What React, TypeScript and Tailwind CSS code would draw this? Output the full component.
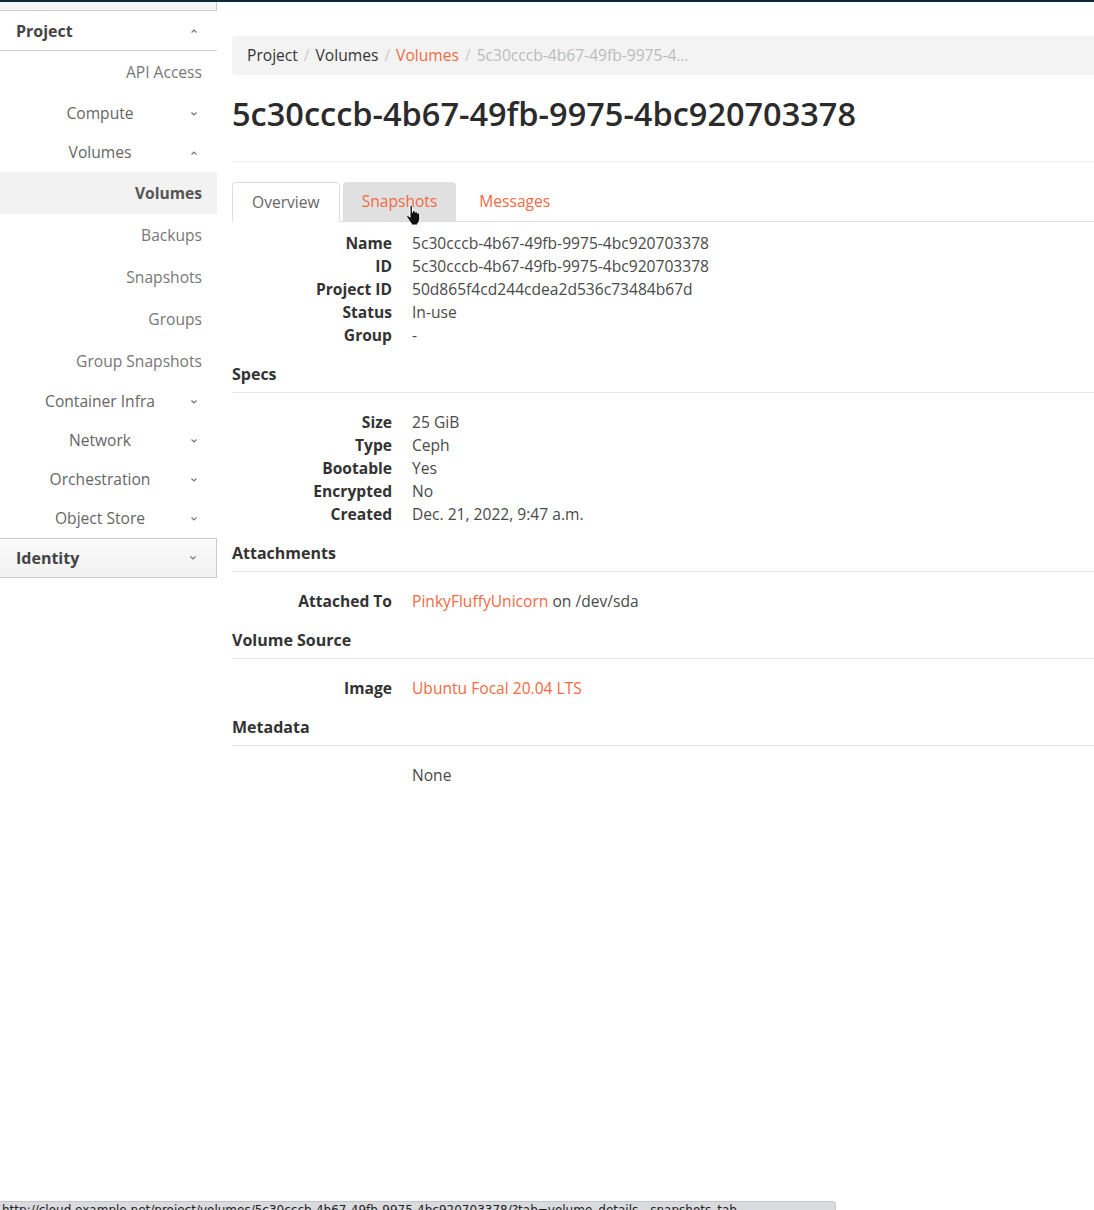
import type { ReactNode } from "react";

const FONT = { fontFamily: '"Open Sans", "Noto Sans", sans-serif' };
const VOLUME_ID = "5c30cccb-4b67-49fb-9975-4bc920703378";

// small chevrons used by the collapsible nav groups
const Chevron = ({ up = false }: { up?: boolean }) => (
  <svg width="8" height="6" viewBox="0 0 8 6" className="text-[#777]">
    <polyline
      points={up ? "1.5,4.5 4,2 6.5,4.5" : "1.5,1.5 4,4 6.5,1.5"}
      fill="none"
      stroke="currentColor"
      strokeWidth="1.2"
    />
  </svg>
);

const NavGroup = ({ label, open = false }: { label: string; open?: boolean }) => (
  <div className="flex items-center h-[39px] pt-[1px] pr-[19px]">
    <span className="flex-1 text-center pl-[10px] text-[#666]">{label}</span>
    <Chevron up={open} />
  </div>
);

const NavLink = ({ label, active = false }: { label: string; active?: boolean }) => (
  <div
    className={`h-[42px] flex items-center justify-end pt-[2px] pr-[15px] ${
      active ? "bg-[#f2f2f2] font-bold text-[#555]" : "text-[#777]"
    }`}
  >
    {label}
  </div>
);

const Sidebar = () => (
  <aside className="w-[217px] shrink-0">
    <div className="h-[9px] bg-[#f5f5f5] border-r border-b border-[#ccc]" />
    <div className="h-[40px] flex items-center justify-between pl-4 pr-[19px] border-b border-[#ccc]">
      <span className="font-bold text-[16px] text-[#444]">Project</span>
      <Chevron up />
    </div>
    <NavLink label="API Access" />
    <div className="h-[1px]" />
    <NavGroup label="Compute" />
    <NavGroup label="Volumes" open />
    <NavLink label="Volumes" active />
    <NavLink label="Backups" />
    <NavLink label="Snapshots" />
    <NavLink label="Groups" />
    <NavLink label="Group Snapshots" />
    <NavGroup label="Container Infra" />
    <NavGroup label="Network" />
    <NavGroup label="Orchestration" />
    <NavGroup label="Object Store" />
    <div className="h-[40px] flex items-center justify-between pl-4 pr-[19px] border-y border-r border-[#ccc] bg-gradient-to-b from-[#fafafa] to-[#f2f2f2]">
      <span className="font-bold text-[16px] text-[#444]">Identity</span>
      <Chevron />
    </div>
  </aside>
);

const Link = ({ children }: { children: ReactNode }) => (
  <span className="text-[#f26a43]">{children}</span>
);

const Section = ({ title }: { title: string }) => (
  <h3 className="mt-[15px] pb-[6px] leading-[24px] border-b border-[#e6e6e6] font-bold text-[16px] text-[#333]">
    {title}
  </h3>
);

const DetailList = ({ rows, className = "" }: { rows: [string, ReactNode][]; className?: string }) => (
  <dl className={`grid grid-cols-[160px_1fr] gap-x-5 leading-[23px] ${className}`}>
    {rows.map(([k, v]) => (
      <div key={k} className="contents">
        <dt className="text-right font-bold text-[#333]">{k}</dt>
        <dd className="text-[#4a4a4a]">{v}</dd>
      </div>
    ))}
  </dl>
);

// pointer hand hovering the Snapshots tab
const HandCursor = () => (
  <svg
    width="16"
    height="20"
    viewBox="0 0 16 20"
    className="absolute left-[63px] top-[23px]"
  >
    <path
      d="M4 1.5c0-.8.6-1.2 1.2-1.2s1.2.4 1.2 1.2v6l.2-1.4c.3-.9 2.2-.9 2.4.2l.1 1c.2-.9 2.1-.9 2.3.3v.8c.4-.8 2.2-.7 2.3.5l.1 4.2c0 2.5-1 4.3-2.3 5.6v1.3H5.3v-1.5C3.8 16.6 1.6 13.6.8 11.9c-.6-1.1.6-2.1 1.6-1.2L4 12.3z"
      fill="#111"
      stroke="#fff"
      strokeWidth="1"
    />
  </svg>
);

const Tabs = () => (
  <div className="mt-5 flex h-[40px] border-b border-[#ddd]">
    <div className="px-[19px] pt-[1px] flex items-center bg-white border border-[#ddd] border-b-white rounded-t-[4px] mb-[-1px] text-[#666]">
      Overview
    </div>
    <div className="relative ml-[3px] px-[19px] pt-[1px] flex items-center bg-[#e0e0e0] rounded-t-[4px] text-[#f26a43]">
      Snapshots
      <HandCursor />
    </div>
    <div className="ml-[3px] px-5 pt-[1px] flex items-center text-[#f26a43]">Messages</div>
  </div>
);

const Breadcrumb = () => {
  const sep = <span className="px-[6px] text-[#ccc]">/</span>;
  return (
    <nav className="mt-[34px] h-[39px] flex items-center pt-[1px] pl-[15px] bg-[#f3f3f3] rounded-l-[4px] whitespace-nowrap">
      <span className="text-[#333]">Project</span>
      {sep}
      <span className="text-[#333]">Volumes</span>
      {sep}
      <Link>Volumes</Link>
      {sep}
      <span className="text-[#bbb]">5c30cccb-4b67-49fb-9975-4…</span>
    </nav>
  );
};

export default function App() {
  return (
    <div className="relative min-h-[1210px] bg-white text-[15.6px]" style={FONT}>
      <div className="h-[2px] bg-[#0d2a3c]" />
      <div className="flex">
        <Sidebar />
        <main className="flex-1 min-w-0 pl-[15px]">
          <Breadcrumb />
          <h1 className="mt-[19px] pb-[27px] leading-[40px] border-b border-[#eee] text-[32.5px] font-semibold text-[#2b2b2b] whitespace-nowrap">
            {VOLUME_ID}
          </h1>
          <Tabs />

          <DetailList
            className="mt-[10px]"
            rows={[
              ["Name", VOLUME_ID],
              ["ID", VOLUME_ID],
              ["Project ID", "50d865f4cd244cdea2d536c73484b67d"],
              ["Status", "In-use"],
              ["Group", "-"],
            ]}
          />

          <Section title="Specs" />
          <DetailList
            className="mt-[18px]"
            rows={[
              ["Size", "25 GiB"],
              ["Type", "Ceph"],
              ["Bootable", "Yes"],
              ["Encrypted", "No"],
              ["Created", "Dec. 21, 2022, 9:47 a.m."],
            ]}
          />

          <Section title="Attachments" />
          <DetailList
            className="mt-[18px]"
            rows={[
              [
                "Attached To",
                <>
                  <Link>PinkyFluffyUnicorn</Link> on /dev/sda
                </>,
              ],
            ]}
          />

          <Section title="Volume Source" />
          <DetailList className="mt-[18px]" rows={[["Image", <Link>Ubuntu Focal 20.04 LTS</Link>]]} />

          <Section title="Metadata" />
          <DetailList className="mt-[18px]" rows={[["", "None"]]} />
        </main>
      </div>

      {/* browser link preview bubble at the bottom edge */}
      <div className="absolute left-0 top-[1201px] w-[836px] h-[12px] overflow-hidden bg-[#d9dbde] rounded-tr-[4px] border-t border-r border-[#c4c6c9]">
        <div className="pl-[2px] text-[12px] leading-[14px] mt-[1px] text-[#222] whitespace-nowrap" style={{ fontFamily: '"DejaVu Sans", sans-serif' }}>
          http://cloud.example.net/project/volumes/5c30cccb-4b67-49fb-9975-4bc920703378/?tab=volume_details__snapshots_tab
        </div>
      </div>
    </div>
  );
}
